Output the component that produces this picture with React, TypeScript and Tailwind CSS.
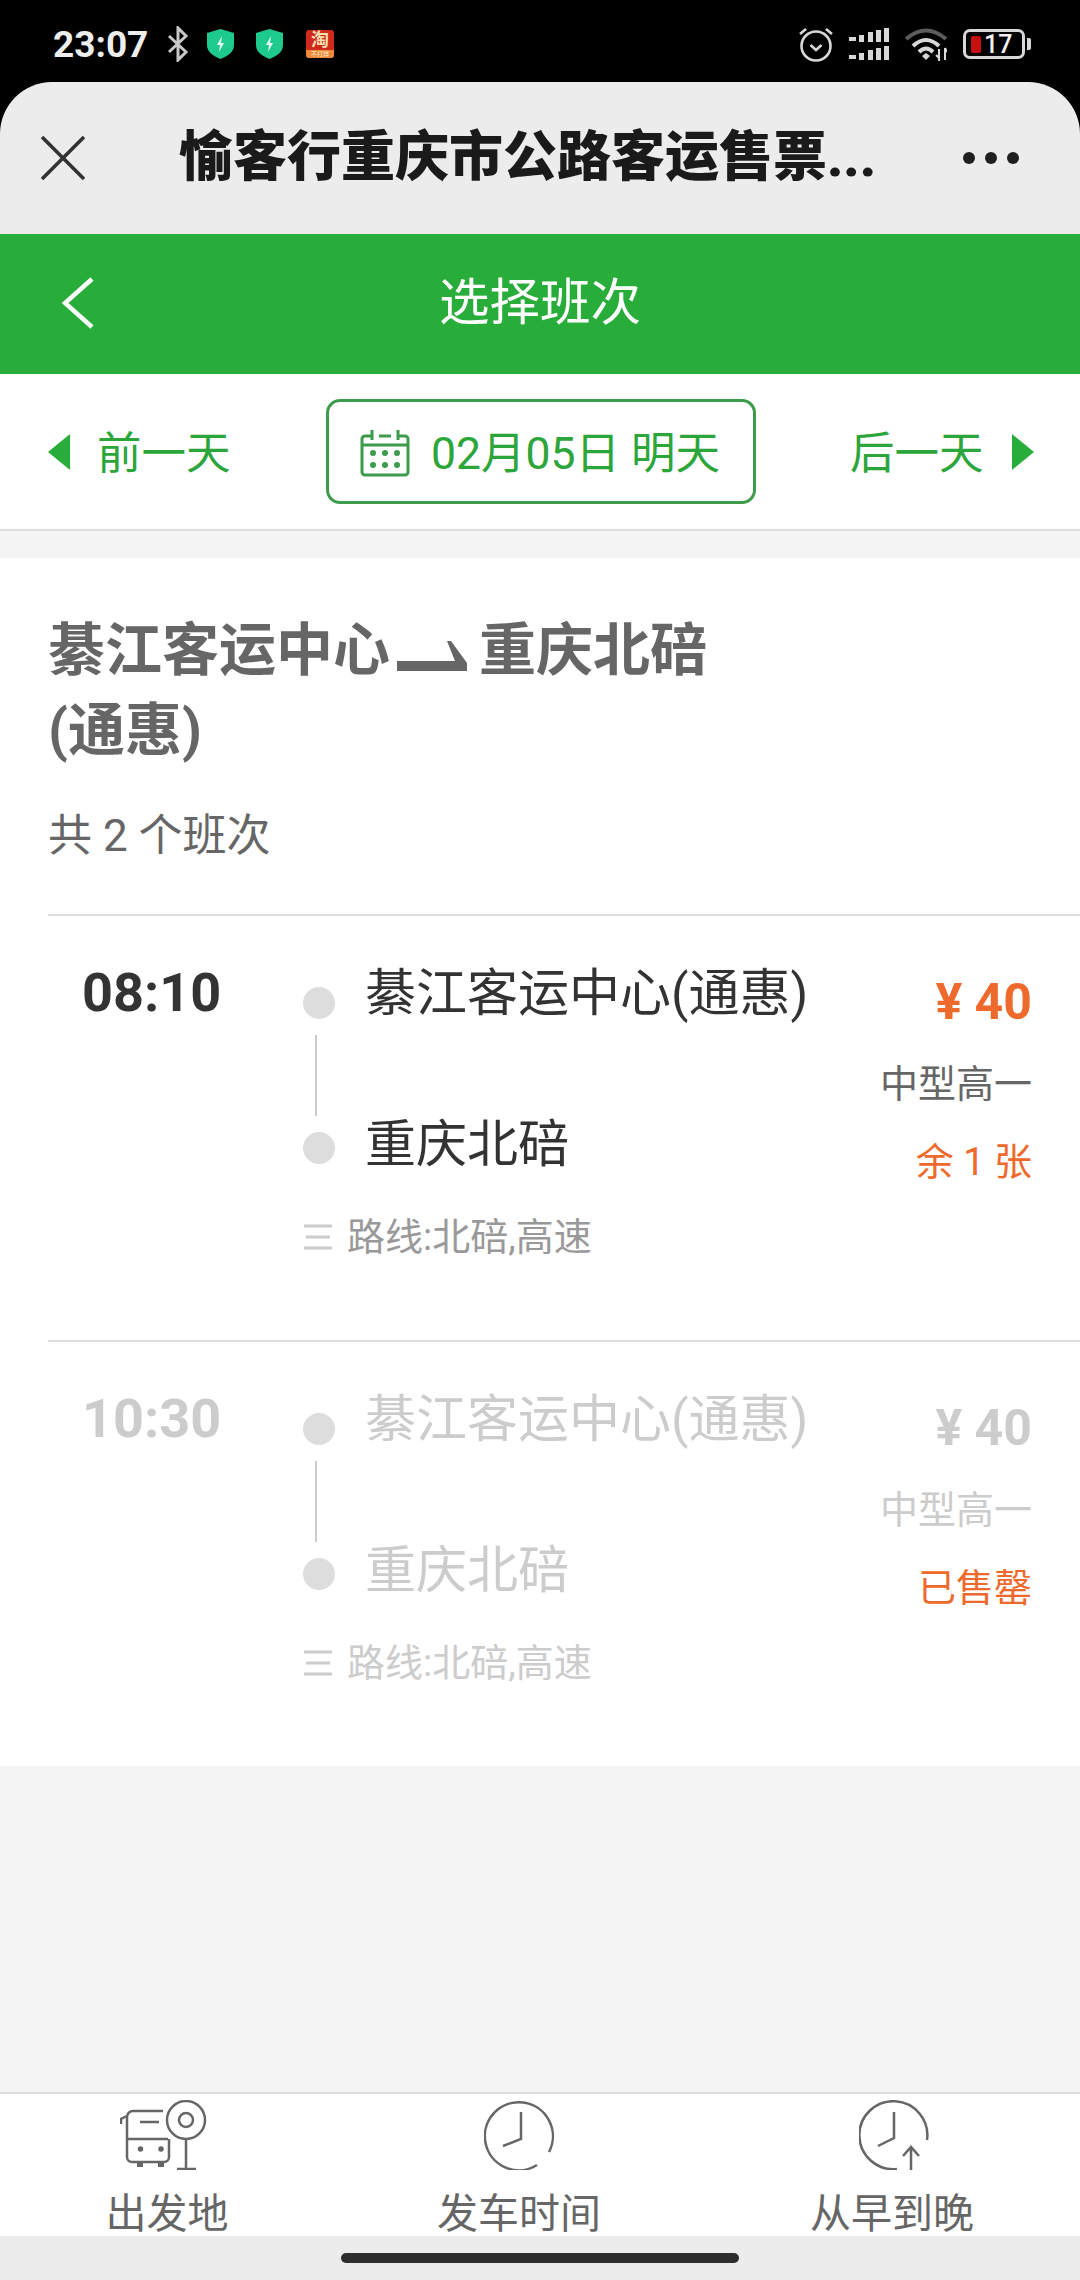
const GREEN_TEXT = "text-[#2ca53b]";

function StatusBar() {
  return (
    <div className="flex h-[82px] shrink-0 items-center bg-black pl-[53px] pr-[49px] pt-[6px] text-[#eeeeee]">
      <span className="w-[114px] text-[37px] font-bold leading-none">23:07</span>
      {/* Bluetooth */}
      <svg width="22" height="36" viewBox="0 0 22 36" fill="none" stroke="#c8c8c8" strokeWidth="3">
        <path d="M2 10l17 16-8 8V2l8 8L2 26" />
      </svg>
      <Shield className="ml-[18px]" />
      <Shield className="ml-[22px]" />
      {/* Taobao notification icon */}
      <div className="ml-[23px] flex h-[28px] w-[28px] flex-col items-center overflow-hidden rounded-[3px] bg-[#cf2a1b]">
        <span className="h-[20px] text-[18px] font-bold leading-[20px] text-[#f9dfb0]">淘</span>
        <span className="h-[8px] w-full bg-[#ec8a3c] text-center text-[6px] leading-[8px] text-[#fff2d8]">不打烊</span>
      </div>
      <div className="flex-1" />
      {/* Alarm */}
      <svg width="36" height="36" viewBox="0 0 36 36" fill="none" stroke="#d8d8d8" strokeWidth="2.6">
        <circle cx="18" cy="20" r="14.5" />
        <path d="M12.5 19l5.5 5 5.5-5" />
        <path d="M2 8l6-5M34 8l-6-5" />
      </svg>
      {/* Dual signal */}
      <svg className="ml-[15px]" width="40" height="32" viewBox="0 0 40 32" fill="#d8d8d8">
        <rect x="0" y="9" width="7" height="4" />
        <rect x="10" y="7" width="5" height="7" />
        <rect x="19" y="4" width="5" height="10" />
        <rect x="27" y="2" width="5" height="12" />
        <rect x="35" y="0" width="5" height="14" />
        <rect x="0" y="27" width="7" height="4" />
        <rect x="10" y="25" width="5" height="7" />
        <rect x="19" y="22" width="5" height="10" />
        <rect x="27" y="20" width="5" height="12" />
        <rect x="35" y="18" width="5" height="14" />
      </svg>
      {/* Wifi */}
      <svg className="ml-[16px]" width="42" height="33" viewBox="0 0 42 33" fill="none">
        <path d="M1 11Q21-6 41 11" stroke="#5c5c5c" strokeWidth="4" />
        <path d="M8 18Q21 6 34 18" stroke="#d8d8d8" strokeWidth="4" />
        <path d="M14 24Q21 17 28 24" stroke="#d8d8d8" strokeWidth="4" />
        <path d="M17 28l4-3 4 3-4 4z" fill="#d8d8d8" />
        <path d="M34 21v12M31 27l3 3M40 20v12M40 20l2 4" stroke="#d8d8d8" strokeWidth="2" />
      </svg>
      {/* Battery */}
      <div className="ml-[16px] flex h-[30px] w-[62px] items-center rounded-[7px] border-[3px] border-[#d8d8d8] pl-[5px]">
        <div className="h-[17px] w-[10px] rounded-[2px] bg-[#c80f0f]" />
        <span className="ml-[3px] text-[25px] font-medium leading-none text-[#f0f0f0]">17</span>
      </div>
      <div className="ml-[2px] h-[12px] w-[4px] rounded-r-[2px] bg-[#d8d8d8]" />
    </div>
  );
}

function Shield({ className }: { className: string }) {
  return (
    <svg className={className} width="27" height="30" viewBox="0 0 27 30">
      <path d="M13.5 0L27 4v12c0 7-6 11-13.5 14C6 27 0 23 0 16V4z" fill="#1ecb8c" />
      <path d="M15 7l-5 9h3l-1 7 5-9h-3z" fill="#e6fff5" />
    </svg>
  );
}

function TitleBar() {
  return (
    <div className="bg-black">
      <div className="flex h-[152px] items-center rounded-t-[52px] bg-[#ececec] pl-[41px]">
        <svg width="44" height="44" viewBox="0 0 44 44" stroke="#333333" strokeWidth="3.6">
          <path d="M1 1l42 42M43 1L1 43" />
        </svg>
        <div className="ml-[94px] w-[784px] whitespace-nowrap text-[54px] font-black leading-none text-[#1a1a1a]">
          愉客行重庆市公路客运售票...
        </div>
        <div className="flex gap-[10px]">
          <div className="h-[12px] w-[12px] rounded-full bg-[#1f1f1f]" />
          <div className="h-[12px] w-[12px] rounded-full bg-[#1f1f1f]" />
          <div className="h-[12px] w-[12px] rounded-full bg-[#1f1f1f]" />
        </div>
      </div>
    </div>
  );
}

function GreenBar() {
  return (
    <div className="flex h-[140px] shrink-0 items-center bg-[#28ad3b] pb-[2px] pl-[62px]">
      <svg width="32" height="52" viewBox="0 0 32 52" fill="none" stroke="#ffffff" strokeWidth="4.5">
        <path d="M30 2L3 26l27 24" />
      </svg>
      <div className="ml-[345px] text-[50.5px] leading-none text-white">选择班次</div>
    </div>
  );
}

function DateBar() {
  return (
    <div className={`flex h-[157px] shrink-0 items-center border-b-2 border-[#dddddd] bg-white pl-[48px] ${GREEN_TEXT}`}>
      <svg width="22" height="36" viewBox="0 0 22 36" fill="#28ad3b">
        <path d="M22 0v36L0 18z" />
      </svg>
      <span className="ml-[27px] w-[141px] pt-[5px] text-[44.5px] leading-none">前一天</span>
      <div className="ml-[88px] flex h-[105px] w-[430px] items-center rounded-[14px] border-[3px] border-[#3d9c4c] pl-[31px]">
        <svg className="mt-[3px]" width="50" height="48" viewBox="0 0 50 48" fill="none" stroke="#3d9c4c" strokeWidth="3">
          <path d="M12 7H5a3 3 0 0 0-3 3v33a3 3 0 0 0 3 3h40a3 3 0 0 0 3-3V10a3 3 0 0 0-3-3h-7" />
          <path d="M2 16h46M12 1v10M38 1v10M19 7h12" />
          <g fill="#3d9c4c" stroke="none">
            <circle cx="13" cy="24" r="3" />
            <circle cx="25" cy="24" r="3" />
            <circle cx="37" cy="24" r="3" />
            <circle cx="13" cy="36" r="3" />
            <circle cx="25" cy="36" r="3" />
            <circle cx="37" cy="36" r="3" />
          </g>
        </svg>
        <span className="ml-[21px] whitespace-nowrap pt-[5px] text-[44.5px] leading-none">02月05日 明天</span>
      </div>
      <span className="ml-[94px] w-[162px] pt-[5px] text-[44.5px] leading-none">后一天</span>
      <svg width="22" height="36" viewBox="0 0 22 36" fill="#28ad3b">
        <path d="M0 0v36l22-18z" />
      </svg>
    </div>
  );
}

function RouteHeader() {
  return (
    <div className="pl-[48px] pt-[53px] text-[#666666]">
      <div className="text-[57px] font-bold leading-[80px]">
        綦江客运中心
        <svg className="ml-[7px] mr-[12px] inline-block align-[-2px]" width="70" height="32" viewBox="0 0 70 32" fill="#666666">
          <path d="M0 21h58L50 1h4l16 22v8H0z" />
        </svg>
        重庆北碚
        <br />
        (通惠)
      </div>
      <div className="mt-[35px] text-[44px] leading-[60px]">共 2 个班次</div>
    </div>
  );
}

interface TripProps {
  time: string;
  remain: string;
  sold?: boolean;
}

function TripRow({ time, remain, sold }: TripProps) {
  const main = sold ? "text-[#cccccc]" : "text-[#333333]";
  const secondary = sold ? "text-[#cccccc]" : "text-[#666666]";
  const price = sold ? "text-[#cccccc]" : "text-[#ee6a2c]";
  const routeText = sold ? "text-[#cccccc]" : "text-[#999999]";

  return (
    <div className="ml-[48px] flex h-[426px] border-t-2 border-[#dddddd] pl-[34px] pr-[48px]">
      <div className={`mt-[47px] w-[221px] shrink-0 text-[54px] font-bold leading-[60px] ${sold ? "text-[#cccccc]" : "text-[#333333]"}`}>
        {time}
      </div>

      <div className="flex w-[555px] shrink-0 flex-col">
        <div className="flex">
          <div className="mt-[71px] flex w-[32px] flex-col items-center">
            <div className="h-[32px] w-[32px] rounded-full bg-[#dddddd]" />
            <div className="mr-[6px] mt-[16px] h-[81px] w-[2px] bg-[#cccccc]" />
            <div className="mt-[16px] h-[32px] w-[32px] rounded-full bg-[#dddddd]" />
          </div>
          <div className={`ml-[30px] mt-[48px] whitespace-nowrap text-[51px] leading-[60px] ${main}`}>
            <div>綦江客运中心(通惠)</div>
            <div className="mt-[91px]">重庆北碚</div>
          </div>
        </div>
        <div className="mt-[37px] flex items-center">
          <svg className="ml-[1px]" width="28" height="26" viewBox="0 0 28 26" stroke="#cccccc" strokeWidth="3">
            <path d="M0 2h28M2 13h24M0 24h28" />
          </svg>
          <span className={`ml-[15px] whitespace-nowrap text-[38px] leading-[50px] ${routeText}`}>路线:北碚,高速</span>
        </div>
      </div>

      <div className="flex-1 text-right">
        <div className={`mt-[56px] whitespace-nowrap text-[50px] font-bold leading-[60px] ${price}`}>¥ 40</div>
        <div className={`mt-[27px] whitespace-nowrap text-[38px] leading-[50px] ${secondary}`}>中型高一</div>
        <div className="mt-[28px] whitespace-nowrap text-[38px] leading-[50px] text-[#ee6a2c]">{remain}</div>
      </div>
    </div>
  );
}

function BottomBar() {
  return (
    <div className="h-[144px] shrink-0 border-t-2 border-[#dddddd] bg-white">
      <div className="grid grid-cols-[334px_370px_376px] text-[#666666]">
        <BottomItem label="出发地">
          <svg className="mr-[7px]" width="88" height="70" viewBox="0 0 88 70" fill="none" stroke="#666666" strokeWidth="2.5">
            <path d="M43 11H13a6 6 0 0 0-6 6v40a5 5 0 0 0 5 5h32a5 5 0 0 0 5-5V39" />
            <path d="M1 24v-5l6-3M7 39h41M20 22h19" />
            <path d="M20 62v5M41 62v5" strokeWidth="6" />
            <circle cx="20.5" cy="49" r="1.5" fill="#666666" />
            <circle cx="41" cy="49" r="1.5" fill="#666666" />
            <circle cx="66" cy="20" r="19" />
            <circle cx="66" cy="20" r="7" />
            <path d="M66 39v30M57 69h19" />
          </svg>
        </BottomItem>
        <BottomItem label="发车时间">
          <svg className="ml-[2px]" width="72" height="70" viewBox="0 0 72 70" fill="none" stroke="#666666" strokeWidth="2.5">
            <path d="M65 52A34 34 0 1 0 53 65" />
            <path d="M37 12v27L19 46" />
          </svg>
        </BottomItem>
        <BottomItem label="从早到晚">
          <svg className="ml-[6px]" width="72" height="70" viewBox="0 0 72 70" fill="none" stroke="#666666" strokeWidth="2.5">
            <path d="M68 40A34 34 0 1 0 38 69" />
            <path d="M35 12v26L19 46" />
            <path d="M52 70V47M44 56l8-9 8 9" />
          </svg>
        </BottomItem>
      </div>
    </div>
  );
}

function BottomItem({ label, children }: { label: string; children: React.ReactNode }) {
  return (
    <div className="flex flex-col items-center pt-[6px]">
      <div className="flex h-[70px] items-center">{children}</div>
      <div className="mt-[24px] whitespace-nowrap text-[41px] leading-[40px]">{label}</div>
    </div>
  );
}

export default function App() {
  return (
    <div className="flex h-[2280px] w-[1080px] flex-col overflow-hidden bg-[#f4f4f4] font-['Roboto','Noto_Sans_CJK_SC',sans-serif]">
      <StatusBar />
      <TitleBar />
      <GreenBar />
      <DateBar />
      <div className="mt-[27px] bg-white">
        <RouteHeader />
        <div className="mt-[48px]">
          <TripRow time="08:10" remain="余 1 张" />
          <TripRow time="10:30" remain="已售罄" sold />
        </div>
      </div>
      <div className="flex-1" />
      <BottomBar />
      <div className="flex h-[44px] shrink-0 items-start justify-center bg-[#ececec] pt-[17px]">
        <div className="h-[10px] w-[398px] rounded-full bg-[#2d2d2d]" />
      </div>
    </div>
  );
}
